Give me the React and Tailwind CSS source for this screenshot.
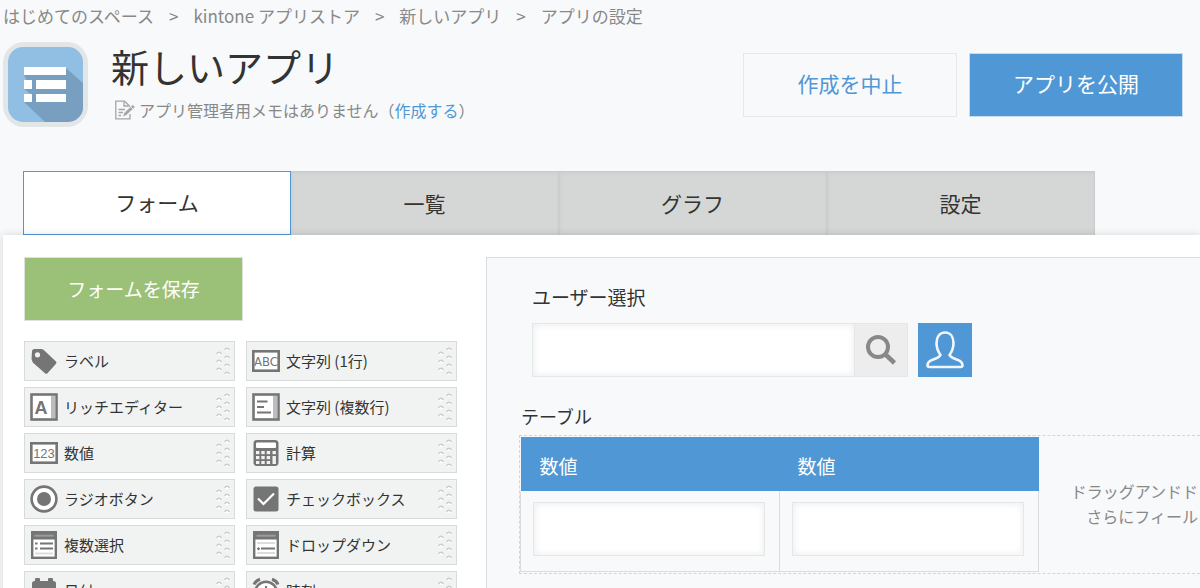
import React from "react";

const INK = "#757575";

function AppIcon() {
  return (
    <svg className="h-[86px] w-[86px] shrink-0" viewBox="0 0 86 86" aria-hidden="true">
      <defs>
        <clipPath id="app-icon-face">
          <rect x="5" y="5" width="75" height="75" rx="15" />
        </clipPath>
      </defs>
      <rect width="85" height="85" x="0" y="0" rx="21" fill="#e2e6e6" />
      <g clipPath="url(#app-icon-face)">
        <rect x="5" y="5" width="75" height="75" fill="#90bfe3" />
        <path d="M63 26 L81 42 V81 H43 L21 60 L29 53 L21 47 L26 44 L21 33 Z" fill="#789fbf" />
        <g fill="#fff">
          <rect x="21" y="25" width="42" height="8" />
          <rect x="21" y="38" width="8" height="9" />
          <rect x="33" y="38" width="30" height="9" />
          <rect x="21" y="52" width="8" height="8" />
          <rect x="33" y="52" width="30" height="8" />
        </g>
      </g>
    </svg>
  );
}

function MemoIcon() {
  return (
    <svg className="h-5 w-5 shrink-0" viewBox="0 0 20 20" fill="none" stroke="#a3a6a6" strokeWidth="1.3" aria-hidden="true">
      <path d="M15 14v4.800H0.800V1.200H9.500l4.800 4.500V7" />
      <path d="M9 1.500v4.500h4.500" />
      <path d="M3.500 9.500h6.500M3.500 12.500h4.500M3.500 15.500h2.500" />
      <path d="M8.500 16l1.200-3.200 8-7.500 1.800 1.800-8 7.500z" fill="#a3a6a6" strokeWidth="0.6" />
      <path d="M15.500 6.500l2.400 2.400" stroke="#f7f9fb" strokeWidth="0.8" />
    </svg>
  );
}

const icons = {
  label: (
    <>
      <path d="M2 4.500Q2 2 4.500 2H11.500L13.500 2.800 26 14.500Q27 15.700 26 16.700L17.500 26.200Q16.300 27.200 15 26.200L2.800 15.500 1.500 12Z" fill={INK} />
      <circle cx="7.500" cy="7.800" r="2.600" fill="#f1f3f3" />
    </>
  ),
  rich: (
    <>
      <rect x="1.500" y="1.500" width="25" height="25" fill="#fff" stroke={INK} strokeWidth="2.600" />
      <rect x="21" y="3" width="4.300" height="22" fill="#bdbdbd" />
      <text x="11" y="20.500" textAnchor="middle" fontSize="18" fontWeight="700" fontFamily="Liberation Sans, sans-serif" fill={INK}>A</text>
    </>
  ),
  number: (
    <>
      <rect x="1.300" y="4.300" width="25.400" height="19.400" fill="#fff" stroke={INK} strokeWidth="2.600" />
      <text x="14" y="18.800" textAnchor="middle" fontSize="13" fontFamily="Liberation Sans, sans-serif" fill={INK}>123</text>
    </>
  ),
  text: (
    <>
      <rect x="1.300" y="4.300" width="25.400" height="19.400" fill="#fff" stroke={INK} strokeWidth="2.600" />
      <text x="14" y="18.800" textAnchor="middle" fontSize="13" fontFamily="Liberation Sans Narrow, DejaVu Sans Condensed, sans-serif" fill={INK}>ABC</text>
    </>
  ),
  radio: (
    <>
      <circle cx="14" cy="14" r="12.400" fill="#fff" stroke={INK} strokeWidth="2.600" />
      <circle cx="14" cy="14" r="7" fill={INK} />
    </>
  ),
  multi: (
    <>
      <rect x="2.200" y="1.200" width="23.600" height="25.600" fill="#fff" stroke={INK} strokeWidth="2.400" />
      <rect x="2" y="1" width="24" height="7.500" fill={INK} />
      <path d="M4.500 4.700h19" stroke="#9b9b9b" strokeWidth="2" />
      <path d="M5 12.500h2.500M5 17.500h2.500M10 12.500h13M10 17.500h13" stroke={INK} strokeWidth="2.200" />
      <path d="M5 22.500h18" stroke="#dcdcdc" strokeWidth="2" />
    </>
  ),
  date: (
    <>
      <rect x="2" y="4" width="24" height="23" rx="2.500" fill={INK} />
      <rect x="5" y="1" width="5" height="6" rx="1" fill={INK} />
      <rect x="18" y="1" width="5" height="6" rx="1" fill={INK} />
      <rect x="4.500" y="11" width="19" height="13.500" fill="#fff" />
    </>
  ),
  textarea: (
    <>
      <rect x="1.500" y="1.500" width="25" height="25" fill="#fff" stroke={INK} strokeWidth="2.600" />
      <rect x="21" y="3" width="4.300" height="22" fill="#bdbdbd" />
      <path d="M5 8.500h10.500M5 14h7M5 19.500h14" stroke={INK} strokeWidth="2.200" />
    </>
  ),
  calc: (
    <>
      <rect x="1.500" y="1" width="25" height="26" rx="3.500" fill={INK} />
      <rect x="4" y="3.500" width="20" height="5.500" rx="1" fill="#fff" />
      <g fill="#f1f3f3">
        <rect x="4" y="12" width="3.400" height="3.200" />
        <rect x="9.300" y="12" width="3.400" height="3.200" />
        <rect x="14.700" y="12" width="3.400" height="3.200" />
        <rect x="20.500" y="12" width="3.400" height="3.200" />
        <rect x="4" y="17" width="3.400" height="3.200" />
        <rect x="9.300" y="17" width="3.400" height="3.200" />
        <rect x="14.700" y="17" width="3.400" height="3.200" />
        <rect x="4" y="22" width="3.400" height="3" />
        <rect x="9.300" y="22" width="3.400" height="3" />
        <rect x="14.700" y="22" width="3.400" height="3" />
        <rect x="20.500" y="17" width="3.400" height="8" />
      </g>
    </>
  ),
  check: (
    <>
      <rect x="1.500" y="1.500" width="25" height="25" rx="2.500" fill={INK} />
      <path d="M6 13.500l5.500 5.500L22 8.500" fill="none" stroke="#fff" strokeWidth="2.200" />
    </>
  ),
  dropdown: (
    <>
      <rect x="2.200" y="1.200" width="23.600" height="25.600" fill="#fff" stroke={INK} strokeWidth="2.400" />
      <rect x="2" y="1" width="24" height="7.500" fill={INK} />
      <path d="M4.500 4.700h19" stroke="#9b9b9b" strokeWidth="2" />
      <path d="M5 12h18M5 22h18" stroke="#dcdcdc" strokeWidth="2" />
      <path d="M5.500 18.500l2-1.500M9 17.500h14" stroke={INK} strokeWidth="2.200" />
    </>
  ),
  time: (
    <>
      <circle cx="14" cy="15.500" r="10.800" fill="#fff" stroke={INK} strokeWidth="2.600" />
      <path d="M2 7.500Q3.500 3.500 8 2.200M26 7.500Q24.500 3.500 20 2.200" fill="none" stroke={INK} strokeWidth="3" />
      <path d="M14 9v7l4 3" fill="none" stroke={INK} strokeWidth="2" />
    </>
  ),
};

const fields = [
  ["label", "ラベル"],
  ["text", "文字列 (1行)"],
  ["rich", "リッチエディター"],
  ["textarea", "文字列 (複数行)"],
  ["number", "数値"],
  ["calc", "計算"],
  ["radio", "ラジオボタン"],
  ["check", "チェックボックス"],
  ["multi", "複数選択"],
  ["dropdown", "ドロップダウン"],
  ["date", "日付"],
  ["time", "時刻"],
];

const gripDots = [
  [3, 5], [3, 13], [3, 21],
  [11, 1], [11, 9], [11, 17], [11, 25],
];

function Grip() {
  return (
    <svg className="h-7 w-3.5 shrink-0" viewBox="0 0 14 28" fill="none" aria-hidden="true">
      {gripDots.map(([x, y]) => (
        <g key={`${x}-${y}`}>
          <ellipse cx={x} cy={y + 1.5} rx="2.600" ry="1.800" fill="#fff" />
          <path d={`M${x - 2.5} ${y + 1.8}q2.500 -3.200 5 0`} stroke="#c8cbcb" strokeWidth="1.500" />
        </g>
      ))}
    </svg>
  );
}

function FieldItem({ icon, name }) {
  return (
    <li>
      <button
        type="button"
        className="flex h-10 w-full cursor-grab items-center border border-[#d8dbdb] bg-[#f1f3f3] pl-[5px] pr-1 text-left text-[15px] text-[#333]"
      >
        <svg className="h-7 w-7 shrink-0" viewBox="0 0 28 28" aria-hidden="true">
          {icons[icon]}
        </svg>
        <span className="ml-1.5 flex-1">{name}</span>
        <Grip />
      </button>
    </li>
  );
}

const crumbs = ["はじめてのスペース", "kintone アプリストア", "新しいアプリ", "アプリの設定"];
const tabs = ["一覧", "グラフ", "設定"];

const inputBox =
  "h-[54px] border border-[#e3e7e8] bg-white px-3 text-base shadow-[inset_2px_2px_6px_#f1f1f1,inset_-2px_-2px_6px_#f5f5f5] outline-none";

export default function App() {
  return (
    <div className="flex h-screen flex-col overflow-hidden bg-[#f7f9fb] font-['Noto_Sans_CJK_JP',sans-serif] text-[#333]">
      <nav className="flex h-8 shrink-0 items-center gap-[15px] pl-[3px] text-[17px] text-[#888]">
        {crumbs.map((name, i) => (
          <React.Fragment key={name}>
            {i > 0 && <span aria-hidden="true">&gt;</span>}
            <a href="#">{name}</a>
          </React.Fragment>
        ))}
      </nav>

      <header className="flex shrink-0 items-start pl-[3px] pr-[17px] pt-[10px]">
        <AppIcon />
        <div className="ml-[22px] flex-1">
          <h1 className="text-[38px] leading-[48px]">新しいアプリ</h1>
          <p className="mt-[10px] flex items-center gap-1 pl-1 text-base leading-5 text-[#888]">
            <MemoIcon />
            <span>
              アプリ管理者用メモはありません（<a href="#" className="text-[#5097d5]">作成する</a>）
            </span>
          </p>
        </div>
        <div className="mt-[11px] flex gap-3">
          <button type="button" className="h-16 w-[214px] border border-[#e6e9ea] bg-[#f8f9fb] pb-0.5 text-[21px] text-[#5097d5]">
            作成を中止
          </button>
          <button type="button" className="h-16 w-[214px] border border-[#c9dced] bg-[#5097d5] pb-0.5 text-[21px] text-white">
            アプリを公開
          </button>
        </div>
      </header>

      <div role="tablist" className="mt-[43px] flex h-16 shrink-0 pl-[23px] text-[21px]">
        <button type="button" role="tab" aria-selected="true" className="w-[268px] border border-[#5097d5] bg-white">
          フォーム
        </button>
        {tabs.map((name) => (
          <button
            key={name}
            type="button"
            role="tab"
            aria-selected="false"
            className="w-[268px] border-r border-t border-[#c8cccd] bg-[#d5d7d6] shadow-[inset_1px_1px_3px_#c8cccd]"
          >
            {name}
          </button>
        ))}
      </div>

      <main className="ml-[3px] flex flex-1 bg-white pl-[21px] pt-[22px] shadow-[0_0_8px_rgba(0,0,0,0.14)]">
        <section className="w-[433px] shrink-0">
          <button type="button" className="h-16 w-[219px] border border-[#dde3dc] bg-[#9bc178] text-[19px] text-white">
            フォームを保存
          </button>
          <ul className="mt-5 grid grid-cols-2 gap-x-[11px] gap-y-1.5">
            {fields.map(([icon, name]) => (
              <FieldItem key={icon} icon={icon} name={name} />
            ))}
          </ul>
        </section>

        <section className="ml-[29px] min-w-0 flex-1 border-l border-t border-[#d9dddf] bg-[#f7f9fb]">
          <div className="pl-[45px] pt-[25px]">
            <label htmlFor="user-select" className="block text-[19px] leading-7">ユーザー選択</label>
            <div className="mt-3 flex">
              <input id="user-select" type="text" className={`w-[323px] ${inputBox}`} />
              <button type="button" aria-label="検索" className="flex h-[54px] w-[53px] items-center justify-center border-y border-r border-[#e3e7e8] bg-[#ededed]">
                <svg className="h-8 w-8" viewBox="0 0 32 32" fill="none" stroke="#888" aria-hidden="true">
                  <circle cx="13" cy="13" r="10" strokeWidth="4" />
                  <path d="M20.500 20.500l9 8.500" strokeWidth="4.500" />
                </svg>
              </button>
              <button type="button" aria-label="ユーザーを選択" className="ml-[10px] flex h-[54px] w-[54px] items-center justify-center bg-[#5097d5]">
                <svg className="h-[38px] w-10" viewBox="0 1 40 38" fill="none" stroke="#f1f6fb" strokeWidth="2.600" strokeLinejoin="round" aria-hidden="true">
                  <path d="M20 2.500C14.500 2.500 11.500 7 11.500 13C11.500 18 13 21.500 15.500 25C14.500 27.500 11 28.500 7 30C3.500 31.500 2.500 33.500 2.500 35.500Q2.500 37 4.500 37H35.500Q37.500 37 37.500 35.500C37.500 33.500 36.500 31.500 33 30C29 28.500 25.500 27.500 24.500 25C27 21.500 28.500 18 28.500 13C28.500 7 25.500 2.500 20 2.500Z" />
                </svg>
              </button>
            </div>
          </div>

          <div className="pl-8 pt-[25px]">
            <h2 id="table-title" className="pl-0.5 text-[18px] leading-7">テーブル</h2>
            <div className="mt-[5px] flex border-y border-l border-dashed border-[#d3d6d7] py-px">
              <table aria-labelledby="table-title" className="w-[519px] shrink-0 table-fixed border-collapse">
                <thead>
                  <tr className="h-[54px] bg-[#5097d5] text-left text-[19px] text-white">
                    <th scope="col" className="pl-[19px] pt-1 font-normal">数値</th>
                    <th scope="col" className="pl-[18px] pt-1 font-normal">数値</th>
                  </tr>
                </thead>
                <tbody>
                  <tr className="h-20">
                    <td className="border border-t-0 border-[#d9dddf] pb-[14px] pl-3 pr-[14px] pt-[11px]">
                      <input type="text" aria-label="数値 1" className={`block w-full ${inputBox}`} />
                    </td>
                    <td className="border border-t-0 border-[#d9dddf] pb-[14px] pl-3 pr-[14px] pt-[11px]">
                      <input type="text" aria-label="数値 2" className={`block w-full ${inputBox}`} />
                    </td>
                  </tr>
                </tbody>
              </table>
              <p className="flex-1 self-center whitespace-nowrap pr-0.5 text-right text-base leading-[25px] text-[#888]">
                ドラッグアンドド
                <br />
                さらにフィール
              </p>
            </div>
          </div>
        </section>
      </main>
    </div>
  );
}
